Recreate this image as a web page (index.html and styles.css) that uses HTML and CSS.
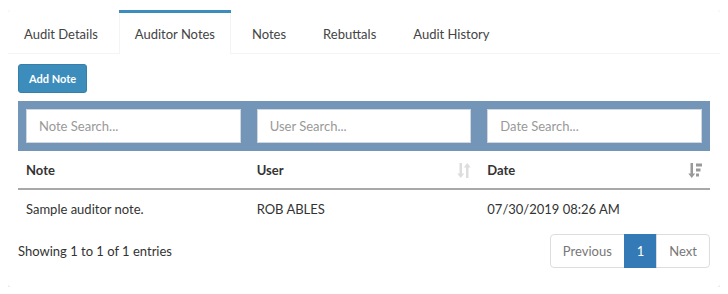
FILE: index.html
```html
<!DOCTYPE html>
<html lang="en">
<head>
    <meta charset="UTF-8">
    <meta name="viewport" content="width=device-width, initial-scale=1.0">
    <title>Audit - Auditor Notes</title>
    <link rel="stylesheet" href="styles.css">
</head>
<body>
    <div class="nav-box">
        <ul class="tabs">
            <li><a href="#">Audit Details</a></li>
            <li class="active"><a href="#">Auditor Notes</a></li>
            <li><a href="#">Notes</a></li>
            <li><a href="#">Rebuttals</a></li>
            <li><a href="#">Audit History</a></li>
        </ul>

        <div class="tab-content">
            <button type="button" class="add-button">Add Note</button>

            <div class="filter-bar">
                <input type="text" class="filter-input" placeholder="Note Search...">
                <input type="text" class="filter-input" placeholder="User Search...">
                <input type="text" class="filter-input" placeholder="Date Search...">
            </div>

            <table class="notes-table">
                <thead>
                    <tr>
                        <th>Note</th>
                        <th class="sortable">User
                            <svg class="sort-icon" width="14" height="15" viewBox="0 0 14 15">
                                <path d="M2.5 0h2.5v10.5h2.2L3.75 15 0.3 10.5h2.2z M9 15h2.5V4.5h2.2L10.25 0 6.8 4.5H9z" fill="currentColor"/>
                            </svg>
                        </th>
                        <th class="sortable sorted">Date
                            <svg class="sort-icon" width="14" height="15" viewBox="0 0 14 15">
                                <path d="M2.5 0h2.5v10.5h2.2L3.75 15 0.3 10.5h2.2z" fill="currentColor"/>
                                <rect x="8" y="0.5" width="6" height="3" fill="currentColor"/>
                                <rect x="8" y="5.5" width="4.5" height="3" fill="currentColor"/>
                                <rect x="8" y="10.5" width="3" height="3" fill="currentColor"/>
                            </svg>
                        </th>
                    </tr>
                </thead>
                <tbody>
                    <tr>
                        <td>Sample auditor note.</td>
                        <td>ROB ABLES</td>
                        <td>07/30/2019 08:26 AM</td>
                    </tr>
                </tbody>
            </table>

            <div class="table-footer">
                <div class="table-info">Showing 1 to 1 of 1 entries</div>
                <ul class="pager">
                    <li class="disabled"><a href="#">Previous</a></li>
                    <li class="active"><a href="#">1</a></li>
                    <li class="disabled"><a href="#">Next</a></li>
                </ul>
            </div>
        </div>
    </div>
</body>
</html>
```

FILE: styles.css
```css
body {
    margin: 10px 8px 0;
    font-family: Lato, 'Liberation Sans', sans-serif;
    font-size: 13px;
    line-height: 20px;
    color: #333;
    background-color: #fff;
}
.nav-box {
    background-color: #fff;
    border-radius: 3px;
    box-shadow: 0 0 1px rgba(0, 0, 0, 0.15), 0 1px 1px rgba(0, 0, 0, 0.1);
}
.tabs {
    display: flex;
    list-style: none;
    margin: 0;
    padding: 0;
    border-bottom: 1px solid #f4f4f4;
}
.tabs li {
    border-top: 3px solid transparent;
    margin-right: 5px;
    margin-bottom: -1px;
}
.tabs a {
    display: block;
    padding: 11px 15px 10px;
    border-left: 1px solid transparent;
    border-right: 1px solid transparent;
    color: #444;
    text-decoration: none;
}
.tabs li.active {
    border-top-color: #3c8dbc;
}
.tabs li.active a {
    background-color: #fff;
    border-left-color: #f4f4f4;
    border-right-color: #f4f4f4;
}
.tab-content {
    padding: 10px;
}
.add-button {
    display: block;
    background-color: #3c8dbc;
    border: 1px solid #367fa9;
    color: white;
    font-family: Lato, 'Liberation Sans', sans-serif;
    font-size: 11px;
    font-weight: bold;
    line-height: 17px;
    padding: 5px 10px;
    border-radius: 3px;
    cursor: pointer;
}
.filter-bar {
    display: grid;
    grid-template-columns: repeat(3, 1fr);
    gap: 16px;
    margin-top: 8px;
    padding: 8px;
    background-color: #7396b8;
}
.filter-input {
    box-sizing: border-box;
    width: 100%;
    height: 34px;
    padding: 6px 12px;
    border: 1px solid #d2d6de;
    font-family: Lato, 'Liberation Sans', sans-serif;
    font-size: 13px;
    color: #555;
}
.filter-input::placeholder {
    color: #999;
}
.notes-table {
    width: 100%;
    border-collapse: collapse;
    table-layout: fixed;
}
.notes-table th,
.notes-table td {
    padding: 8px;
    text-align: left;
}
.notes-table th {
    position: relative;
    font-weight: bold;
    padding-top: 9px;
    padding-bottom: 8px;
    border-bottom: 2px solid #a8a8a8;
}
.notes-table td {
    padding-top: 9px;
}
.sort-icon {
    position: absolute;
    right: 8px;
    top: 12px;
    color: #ddd;
}
.sorted .sort-icon {
    color: #999;
}
.table-footer {
    display: flex;
    justify-content: space-between;
    align-items: center;
    margin-top: 7px;
    margin-bottom: 9px;
}
.pager {
    display: flex;
    list-style: none;
    margin: 0;
    padding: 0;
}
.pager a {
    display: block;
    padding: 6px 12px;
    margin-left: -1px;
    border: 1px solid #ddd;
    color: #777;
    text-decoration: none;
}
.pager li:first-child a {
    margin-left: 0;
    border-radius: 4px 0 0 4px;
}
.pager li:last-child a {
    border-radius: 0 4px 4px 0;
}
.pager li.active a {
    background-color: #337ab7;
    border-color: #337ab7;
    color: #fff;
}
```
